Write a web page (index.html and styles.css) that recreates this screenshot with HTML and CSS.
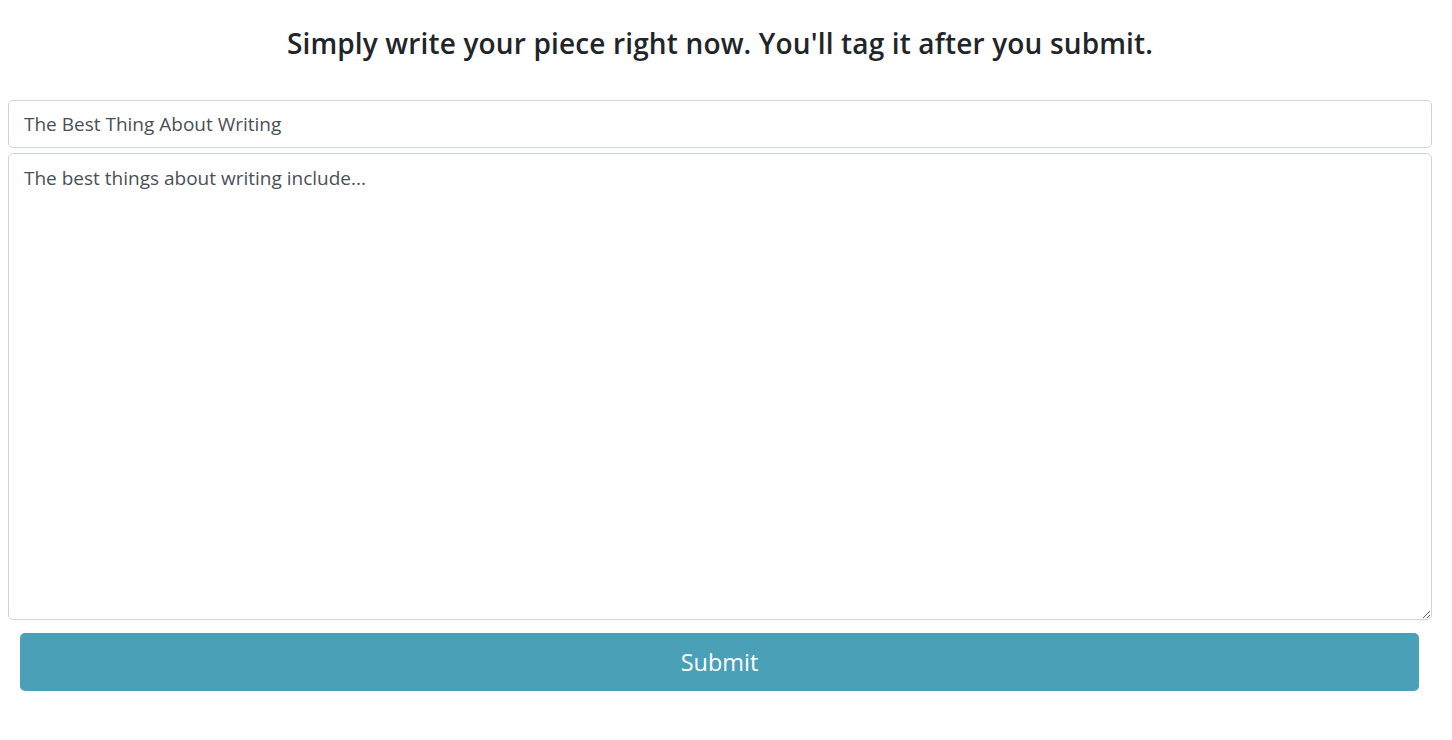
FILE: index.html
```html
<!DOCTYPE html>
<html>
<head>
<meta charset="utf-8">
<link rel="stylesheet" href="styles.css">
</head>
<body>
<main class="page">
  <h3 class="title">Simply write your piece right now. You'll tag it after you submit.</h3>
  <form class="form">
    <input class="field field-title" type="text" value="The Best Thing About Writing">
    <textarea class="field field-body">The best things about writing include...</textarea>
    <div class="actions">
      <button class="submit" type="button">Submit</button>
    </div>
  </form>
</main>
</body>
</html>
```

FILE: styles.css
```css
html, body {
  margin: 0;
  padding: 0;
  background: #fff;
}
body {
  font-family: "Open Sans", "Noto Sans", sans-serif;
  color: #212529;
}
.page {
  padding: 0 20px 0 8px;
}
.title {
  margin: 0;
  padding-top: 25px;
  height: 100px;
  box-sizing: border-box;
  text-align: center;
  font-size: 28px;
  font-weight: 600;
  line-height: 37px;
  color: #212529;
  letter-spacing: 0.15px;
}
.form {
  display: flex;
  flex-direction: column;
}
.field {
  display: block;
  width: 100%;
  box-sizing: border-box;
  border: 1px solid #ced4da;
  border-radius: 5px;
  font-family: "Open Sans", "Noto Sans", sans-serif;
  font-size: 19px;
  color: #495057;
  background: #fff;
  padding: 0 15px;
  outline: none;
  margin: 0;
}
.field-title {
  height: 48px;
  line-height: 46px;
}
.field-body {
  margin-top: 5px;
  height: 467px;
  padding-top: 10px;
  line-height: 28px;
  resize: vertical;
}
.actions {
  padding: 13px 13px 0 12px;
}
.submit {
  display: block;
  width: 100%;
  height: 58px;
  border: none;
  border-radius: 5px;
  background: #4aa0b6;
  color: #fff;
  font-family: "Open Sans", "Noto Sans", sans-serif;
  font-size: 23.5px;
  cursor: pointer;
}
```
